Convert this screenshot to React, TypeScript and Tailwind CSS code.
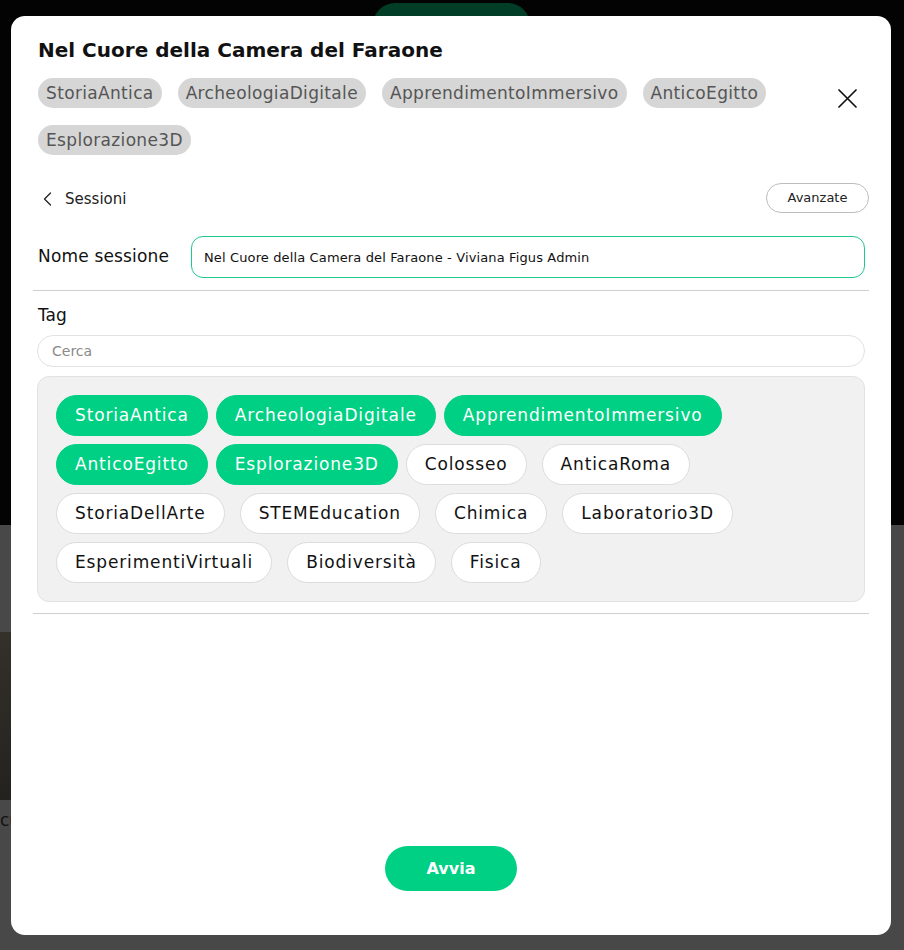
import { useState } from "react";

const headerTags = [
  "StoriaAntica",
  "ArcheologiaDigitale",
  "ApprendimentoImmersivo",
  "AnticoEgitto",
  "Esplorazione3D",
];

const allTags = [
  "StoriaAntica",
  "ArcheologiaDigitale",
  "ApprendimentoImmersivo",
  "AnticoEgitto",
  "Esplorazione3D",
  "Colosseo",
  "AnticaRoma",
  "StoriaDellArte",
  "STEMEducation",
  "Chimica",
  "Laboratorio3D",
  "EsperimentiVirtuali",
  "Biodiversità",
  "Fisica",
];

const font = { fontFamily: "'DejaVu Sans', 'Noto Sans', sans-serif" };

export default function App() {
  const [selected, setSelected] = useState<string[]>(headerTags);
  const [name, setName] = useState(
    "Nel Cuore della Camera del Faraone - Viviana Figus Admin"
  );
  const [search, setSearch] = useState("");

  const toggle = (tag: string) => {
    if (selected.includes(tag)) {
      setSelected(selected.filter((t) => t !== tag));
    } else {
      setSelected([...selected, tag]);
    }
  };

  const visible = allTags.filter((t) =>
    t.toLowerCase().includes(search.toLowerCase())
  );

  return (
    <div
      className="relative w-[904px] h-[950px] overflow-hidden bg-[#484848]"
      style={font}
    >
      {/* BACKGROUND PAGE (behind overlay) */}
      <div className="h-[525px] bg-[#030303] pt-[3px]">
        <div className="ml-[373px] w-[157px] h-[44px] rounded-full bg-[#023d27]" />
      </div>
      <div className="pt-[107px]">
        <div className="w-[40px] h-[168px] bg-[#2c2a26] bg-gradient-to-b from-[#34312b] to-[#24221f]" />
        <div className="mt-[8px] text-[17px] text-[#111] leading-6">cu</div>
      </div>

      {/* MODAL */}
      <div className="absolute left-[11px] top-[16px] w-[880px] h-[919px] bg-white rounded-[14px] flex flex-col px-[26px]">
        {/* HEADER */}
        <div className="pt-[20px] pl-[1px]">
          <h1 className="text-[20px] leading-7 font-bold text-[#111]">
            Nel Cuore della Camera del Faraone
          </h1>
          <div className="flex items-start mt-[14px]">
            <div className="w-[790px] flex flex-wrap gap-x-4 gap-y-[17px]">
              {headerTags.map((tag) => (
                <span
                  key={tag}
                  className="h-[30px] px-[8px] rounded-full bg-[#d6d6d6] text-[#555] text-[17px] leading-[30px] tracking-[0.02em]"
                >
                  {tag}
                </span>
              ))}
            </div>
            <button className="ml-auto mt-[11px] mr-[8px] text-[#111]">
              <svg width="19" height="19" viewBox="0 0 19 19">
                <path
                  d="M1 1 L18 18 M18 1 L1 18"
                  stroke="currentColor"
                  strokeWidth="1.7"
                  strokeLinecap="round"
                />
              </svg>
            </button>
          </div>
        </div>

        {/* SESSIONI ROW */}
        <div className="flex items-center justify-between mt-[28px]">
          <button className="flex items-center gap-[13px] pl-[6px] pt-[2px] text-[15px] text-[#222]">
            <svg width="9" height="14" viewBox="0 0 9 14">
              <path
                d="M7.5 1 L1.5 7 L7.5 13"
                fill="none"
                stroke="currentColor"
                strokeWidth="1.3"
                strokeLinecap="round"
                strokeLinejoin="round"
              />
            </svg>
            Sessioni
          </button>
          <button className="h-[30px] w-[103px] -mr-[4px] rounded-full border border-[#bdbdbd] text-[13px] text-[#222]">
            Avanzate
          </button>
        </div>

        {/* NOME SESSIONE */}
        <div className="flex items-center mt-[23px]">
          <label className="w-[154px] shrink-0 pl-[1px] text-[17px] text-[#111] tracking-[0.01em]">
            Nome sessione
          </label>
          <input
            value={name}
            onChange={(e) => setName(e.target.value)}
            className="flex-1 h-[42px] rounded-[12px] border border-[#1fc98a] px-3 text-[13px] text-[#111] tracking-[0.01em] outline-none"
          />
        </div>

        <div className="-mx-1 mt-[12px] border-t border-[#cfcfcf]" />

        {/* TAG */}
        <div className="mt-[12px] pl-[1px] text-[17px] leading-6 text-[#111]">Tag</div>
        <input
          value={search}
          onChange={(e) => setSearch(e.target.value)}
          placeholder="Cerca"
          className="mt-[8px] h-[32px] w-full rounded-full border border-[#e2e2e2] px-[14px] text-[14px] text-[#111] placeholder:text-[#8a8a8a] outline-none"
        />

        <div className="mt-[9px] rounded-[12px] border border-[#e2e2e2] bg-[#f1f1f1] p-[18px] flex flex-wrap gap-2">
          {visible.map((tag) => {
            const on = selected.includes(tag);
            return (
              <button
                key={tag}
                onClick={() => toggle(tag)}
                className={`h-[41px] px-[18px] rounded-full text-[17px] tracking-[0.05em] border ${
                  on
                    ? "bg-[#00d084] border-[#00d084] text-white"
                    : "bg-white border-[#dcdcdc] text-[#111] mr-[7px]"
                }`}
              >
                {tag}
              </button>
            );
          })}
        </div>

        <div className="-mx-1 mt-[11px] border-t border-[#cfcfcf]" />

        {/* FOOTER */}
        <div className="mt-auto pb-[44px] flex justify-center">
          <button className="w-[132px] h-[45px] rounded-full bg-[#00d084] text-white text-[16px] font-bold">
            Avvia
          </button>
        </div>
      </div>
    </div>
  );
}
